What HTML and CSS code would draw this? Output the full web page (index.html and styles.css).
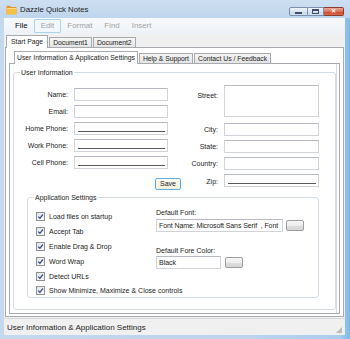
FILE: index.html
```html
<!DOCTYPE html>
<html>
<head>
<meta charset="utf-8">
<link rel="stylesheet" href="styles.css">
</head>
<body>
<div class="window">
  <div class="titlebar">
    <svg class="app-icon" viewBox="0 0 11 10" width="11" height="10">
      <path d="M0.5 1.5 Q0.5 0.8 1.2 0.8 L4 0.8 L5 2 L9.8 2 Q10.5 2 10.5 2.7 L10.5 9.2 L0.5 9.2 Z" fill="#e59a2c"/>
      <path d="M0.5 3.6 L10.5 3.6 L10.5 9.2 L0.5 9.2 Z" fill="#f8bf45"/>
      <path d="M0.5 3.6 L10.5 3.6" stroke="#fde7a6" stroke-width="0.8"/>
    </svg>
    <span class="title">Dazzle Quick Notes</span>
    <div class="controls">
      <span class="ctl ctl-min"><i></i></span>
      <span class="ctl ctl-max"><i></i></span>
      <span class="ctl ctl-close">&#x2715;</span>
    </div>
  </div>
  <div class="client">
    <div class="menubar">
      <span class="menu-item">File</span>
      <span class="menu-item disabled hover">Edit</span>
      <span class="menu-item disabled">Format</span>
      <span class="menu-item disabled">Find</span>
      <span class="menu-item disabled">Insert</span>
    </div>
    <div class="tabctl outer">
      <div class="tabstrip">
        <span class="tab active">Start Page</span>
        <span class="tab">Document1</span>
        <span class="tab">Document2</span>
      </div>
      <div class="tabpanel">
        <div class="tabctl inner">
          <div class="tabstrip">
            <span class="tab active">User Information &amp; Application Settings</span>
            <span class="tab">Help &amp; Support</span>
            <span class="tab">Contact Us / Feedback</span>
          </div>
          <div class="tabpanel">
            <div class="group user-group">
              <span class="legend">User Information</span>
              <div class="form-row">
                <div class="form-left">
                  <span class="lbl">Name:</span><span class="tb"></span>
                  <span class="lbl">Email:</span><span class="tb"></span>
                  <span class="lbl">Home Phone:</span><span class="tb masked"></span>
                  <span class="lbl">Work Phone:</span><span class="tb masked"></span>
                  <span class="lbl">Cell Phone:</span><span class="tb masked"></span>
                  <span class="btn save">Save</span>
                </div>
                <div class="form-right">
                  <span class="lbl lbl-top">Street:</span><span class="tb street"></span>
                  <span class="lbl">City:</span><span class="tb"></span>
                  <span class="lbl">State:</span><span class="tb"></span>
                  <span class="lbl">Country:</span><span class="tb"></span>
                  <span class="lbl">Zip:</span><span class="tb masked"></span>
                </div>
              </div>
              <div class="group app-group">
                <span class="legend">Application Settings</span>
                <div class="app-row">
                  <div class="checks">
                    <div class="check"><span class="cb"><svg viewBox="0 0 7 7" width="7" height="7"><path d="M1.2 3.6 L2.9 5.3 L5.9 1.5" fill="none" stroke="#3b4f8c" stroke-width="1.3"/></svg></span>Load files on startup</div>
                    <div class="check"><span class="cb"><svg viewBox="0 0 7 7" width="7" height="7"><path d="M1.2 3.6 L2.9 5.3 L5.9 1.5" fill="none" stroke="#3b4f8c" stroke-width="1.3"/></svg></span>Accept Tab</div>
                    <div class="check"><span class="cb"><svg viewBox="0 0 7 7" width="7" height="7"><path d="M1.2 3.6 L2.9 5.3 L5.9 1.5" fill="none" stroke="#3b4f8c" stroke-width="1.3"/></svg></span>Enable Drag &amp; Drop</div>
                    <div class="check"><span class="cb"><svg viewBox="0 0 7 7" width="7" height="7"><path d="M1.2 3.6 L2.9 5.3 L5.9 1.5" fill="none" stroke="#3b4f8c" stroke-width="1.3"/></svg></span>Word Wrap</div>
                    <div class="check"><span class="cb"><svg viewBox="0 0 7 7" width="7" height="7"><path d="M1.2 3.6 L2.9 5.3 L5.9 1.5" fill="none" stroke="#3b4f8c" stroke-width="1.3"/></svg></span>Detect URLs</div>
                    <div class="check"><span class="cb"><svg viewBox="0 0 7 7" width="7" height="7"><path d="M1.2 3.6 L2.9 5.3 L5.9 1.5" fill="none" stroke="#3b4f8c" stroke-width="1.3"/></svg></span>Show Minimize, Maximize &amp; Close controls</div>
                  </div>
                  <div class="prefs">
                    <span class="plbl">Default Font:</span>
                    <div class="prow font-row">
                      <span class="tb font-tb">Font Name: Microsoft Sans Serif&nbsp; , Font</span>
                      <span class="btn dots"></span>
                    </div>
                    <span class="plbl color-lbl">Default Fore Color:</span>
                    <div class="prow color-row">
                      <span class="tb color-tb">Black</span>
                      <span class="btn dots"></span>
                    </div>
                  </div>
                </div>
              </div>
            </div>
          </div>
        </div>
      </div>
    </div>
    <div class="statusbar">
      <span>User Information &amp; Application Settings</span>
      <span class="grip"></span>
    </div>
  </div>
</div>
</body>
</html>
```
FILE: styles.css
```css
* { box-sizing: border-box; margin: 0; padding: 0; }
body {
  width: 350px; height: 339px; overflow: hidden;
  font-family: "Liberation Sans", Arial, sans-serif;
  font-size: 7px; color: #1c1c1c; background: #bcd3ec;
}
.window {
  width: 350px; height: 339px;
  display: flex; flex-direction: column;
  background: linear-gradient(to right, #c4d8ee 0%, #bed4ec 70%, #a9ccee 97%, #7dbbe8 100%);
}
.titlebar {
  height: 18px; display: flex; align-items: center; padding-left: 6px;
  background: linear-gradient(#cddff2, #bfd5ec);
}
.app-icon { width: 11px; height: 10px; margin-top: 1px; }
.title { font-size: 7.8px; color: #1b1b1b; margin-left: 3px; line-height: 10px; margin-top: 1px; }
.controls { margin-left: auto; align-self: flex-start; margin-top: 7px; margin-right: 6px; display: flex; height: 9px; }
.ctl {
  display: flex; align-items: center; justify-content: center; height: 9px;
  border: 1px solid #7c90ab;
  background: linear-gradient(#eef3f9, #dbe5f1 50%, #c7d6e8 51%, #d5e2f0);
}
.ctl-min { width: 19px; border-radius: 2px 0 0 2px; }
.ctl-max { width: 16px; border-left: 0; }
.ctl-close {
  width: 20px; border-left: 0; border-radius: 0 2px 2px 0;
  background: linear-gradient(#eca897, #d9755c 50%, #c84424 51%, #d96c4e);
  border-color: #8e3d2c; color: #fff; font-size: 6px; font-weight: bold; line-height: 7px;
}
.ctl-min i { display: block; width: 7px; height: 2px; background: #3d4f6c; margin-top: 3px; }
.ctl-max i { display: block; width: 7px; height: 5px; border: 1px solid #3d4f6c; border-top-width: 2px; }

.client {
  flex: 1; margin: 0 5px 4px 4px; background: #f0f0f0;
  display: flex; flex-direction: column; min-height: 0;
}
.menubar {
  height: 16px; display: flex; align-items: center; padding-left: 5px;
  font-size: 7.9px; background: linear-gradient(#f7f9fc, #eef2f7);
}
.menu-item { padding: 0 5px; line-height: 12px; border: 1px solid transparent; color: #111; }
.menu-item.disabled { color: #a3a3a3; }
.menu-item.hover { border-color: #a9d5ea; background: #f2f7fb; border-radius: 1px; padding: 0 6px; }

.tabctl { display: flex; flex-direction: column; }
.tabctl.outer { margin: 0 1px; height: 283px; }
.tabstrip { height: 13px; display: flex; align-items: flex-end; }
.tab {
  display: block; height: 10px; line-height: 9px; padding: 0 3px;
  border: 1px solid #a6a9ae; border-bottom: 0; margin-right: 1px;
  background: linear-gradient(#f5f5f5, #e4e4e4);
  white-space: nowrap; font-size: 6.8px;
}
.tab.active {
  height: 13px; line-height: 11px; background: #fff; margin-bottom: -1px;
  position: relative; z-index: 1; border-color: #a6a9ae; padding: 0 4px;
}
.outer > .tabstrip { padding-left: 1px; }
.outer > .tabpanel {
  height: 270px; border: 1px solid #a6a9ae; background: #fff;
  padding: 2px 3px 2px 3px;
}
.tabctl.inner { height: 266px; }
.inner > .tabstrip { padding-left: 5px; }
.inner > .tabstrip .tab { padding: 0 3px; }
.inner > .tabstrip .tab.active { padding: 0 2px; }
.inner > .tabpanel {
  height: 251px; border: 1px solid #a6a9ae; background: #fff;
  box-shadow: inset -2px 0 0 #fff, inset -3px 0 0 #dcdcdc;
}

.group { border: 1px solid #d3dce3; border-radius: 3px; }
.legend {
  display: block; width: max-content; height: 9px; line-height: 9px;
  margin: -5px 0 0 6px; padding: 0 1px; background: #fff;
}
.user-group { margin: 8px 3px 0 3px; height: 238px; }

.form-row { display: flex; margin-top: 8px; height: 105px; }
.form-left {
  display: grid; grid-template-columns: 54px 94px 7px;
  grid-template-rows: repeat(5, 13px) auto;
  column-gap: 6px; row-gap: 4px; margin-top: 3px; align-content: start;
}
.form-right {
  display: grid; grid-template-columns: 37px 95px;
  grid-template-rows: 34px 13px 13px 13px 14px;
  column-gap: 6px; row-gap: 4px; align-content: start;
}
.lbl { grid-column: 1; text-align: right; align-self: center; white-space: nowrap; line-height: 9px; }
.lbl-top { align-self: start; padding-top: 6px; }
.tb {
  display: block; height: 13px; border: 1px solid #d0d3d8; border-top-color: #b7bbc1;
  background: #fff; font-size: 7px; line-height: 11px; padding-left: 2px;
  white-space: nowrap; overflow: hidden;
}
.form-left .tb, .form-right .tb { grid-column: 2; }
.form-right .street { height: 32px; }
.tb.masked { display: flex; align-items: flex-end; padding: 0 2px 2px 3px; }
.tb.masked::after { content: ""; flex: 1; height: 1px; background: #5a5a5a; }
.btn { display: block; }
.save {
  grid-column: 2 / 4; justify-self: end; margin-top: 5px;
  width: 26px; height: 12px; border: 1px solid #5fb1dc; border-radius: 2px;
  background: linear-gradient(#fbfbf1, #f1f0de); text-align: center; line-height: 10px;
  font-size: 7px;
}

.app-group { margin: 7px 0 0 13px; width: 292px; height: 101px; }
.app-row { display: flex; margin-top: 7.6px; }
.checks { width: 128px; padding-left: 8px; }
.check { display: flex; align-items: center; height: 14.8px; white-space: nowrap; }
.cb {
  width: 9px; height: 9px; margin-right: 4px; border: 1px solid #8f9194;
  background: linear-gradient(135deg, #e2e3e5, #fdfdfd);
  display: flex; align-items: center; justify-content: center;
}
.cb svg { display: block; }
.prefs { display: flex; flex-direction: column; margin-top: -2px; }
.plbl { line-height: 9px; height: 9px; }
.prow { display: flex; align-items: center; }
.font-row { margin-top: 2.4px; }
.font-tb { width: 127px; letter-spacing: -0.1px; }
.color-lbl { margin-top: 13.6px; }
.color-row { margin-top: 1.4px; }
.color-tb { width: 65px; }
.dots {
  width: 18px; height: 11px; margin-left: 3px; border: 1px solid #9d9d9d; border-radius: 2px;
  background: linear-gradient(#f7f7f7, #ececec 50%, #dedede 51%, #d6d6d6);
}
.color-row .dots { margin-left: 4px; }

.statusbar {
  height: 17px; margin-top: 1px; border-top: 1px solid #d9d9d9;
  display: flex; align-items: center; padding: 0 3px 0 3px;
  font-size: 8px; color: #1e1e1e; background: #f0f0f0;
}
.grip {
  margin-left: auto; width: 6px; height: 6px; margin-top: 6px;
  background-image: radial-gradient(circle, #a0a0a0 0.6px, transparent 0.9px);
  background-size: 2px 2px;
  clip-path: polygon(100% 0, 100% 100%, 0 100%);
}
```
